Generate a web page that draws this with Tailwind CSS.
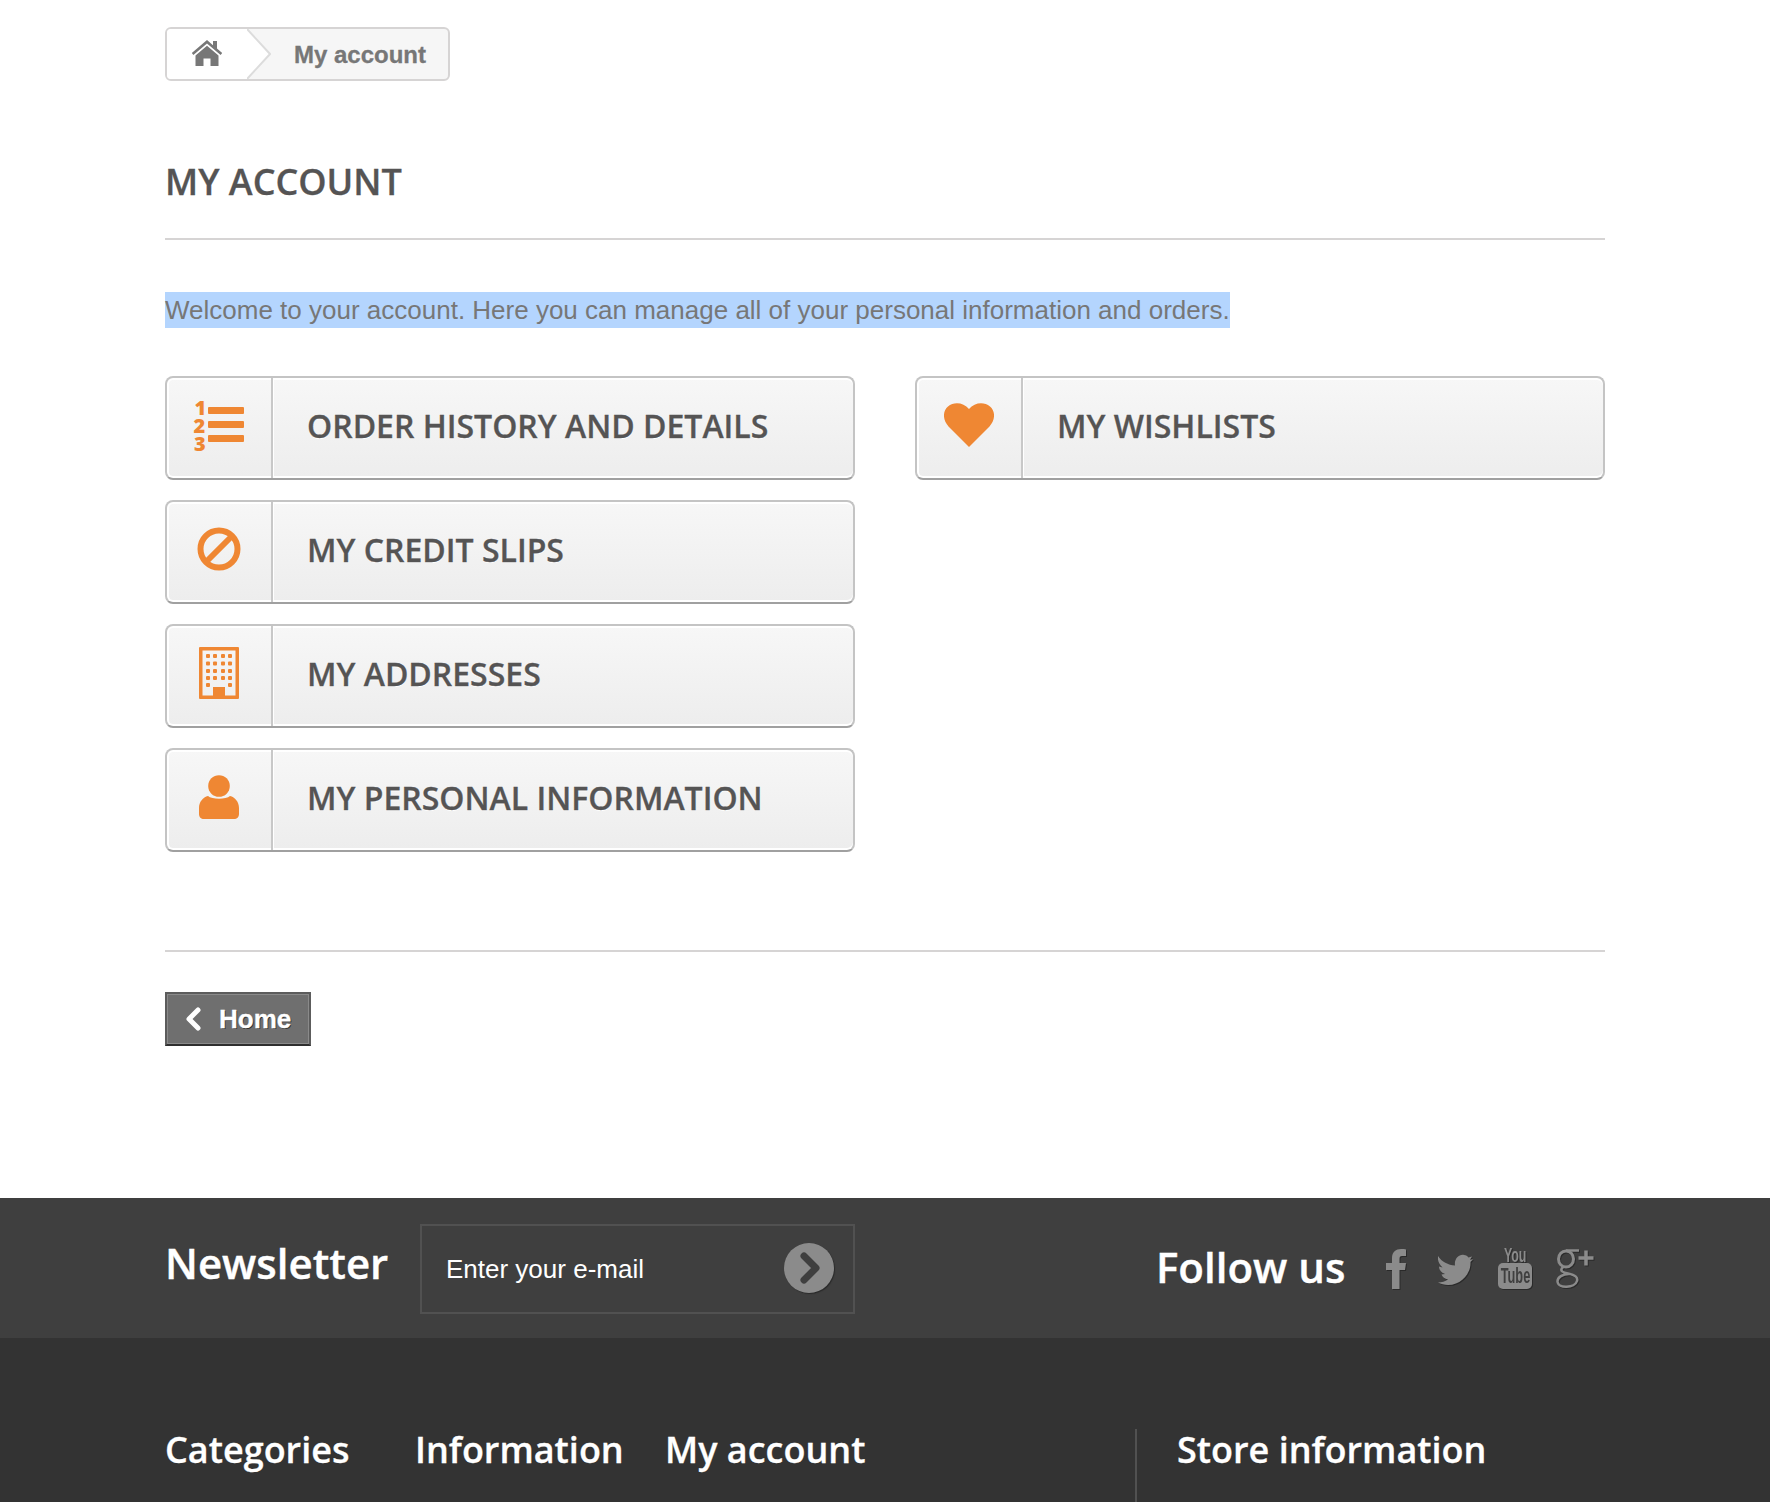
<!DOCTYPE html>
<html lang="en">
  <head>
    <meta charset="UTF-8" />
    <title>My account</title>
    <script src="https://cdn.jsdelivr.net/npm/@tailwindcss/browser@4"></script>
  </head>

  <body class="bg-white h-[1502px] overflow-hidden flex flex-col font-['Liberation_Sans',sans-serif]">
    <main class="w-[1440px] ml-[165px] pt-[27px] h-[1198px] shrink-0">
      <!-- breadcrumb -->
      <div class="relative flex items-center w-[285px] h-[54px] border-2 border-[#d6d4d4] rounded-[6px] bg-[#f6f6f6] overflow-hidden">
        <div class="w-[80px] h-full bg-white flex items-center justify-center">
          <svg class="w-[32px] h-[28px] mb-[3px]" viewBox="0 0 32 28" fill="#777777">
            <path d="M16 1 L0.8 14 L2.4 16 L16 4.6 L29.6 16 L31.2 14 L26 9.6 L26 2 L22 2 L22 6.2 Z" />
            <path d="M16 6.8 L4.5 16.4 L4.5 27 L12.5 27 L12.5 19.5 L19.5 19.5 L19.5 27 L27.5 27 L27.5 16.4 Z" />
          </svg>
        </div>
        <svg class="w-[24px] h-[50px] shrink-0" viewBox="0 0 24 50" fill="none">
          <path d="M0 0 L23 25 L0 50 Z" fill="#ffffff" />
          <path d="M0 0 L23 25 L0 50" stroke="#dcdcdc" stroke-width="2" />
        </svg>
        <span class="pl-[23px] pt-[1px] text-[24px] font-bold text-[#777777] whitespace-nowrap [-webkit-text-stroke:0.3px_#777777]">My account</span>
      </div>

      <h1 class="mt-[76px] font-['Open_Sans',sans-serif] font-semibold text-[36px] leading-[50px] text-[#555454] uppercase [-webkit-text-stroke:0.3px_#555454]">My account</h1>
      <div class="mt-[31px] h-[2px] bg-[#d6d4d4]"></div>

      <p class="mt-[52px] h-[36px] leading-[36px] text-[26px] text-[#777777]">
        <span class="bg-[#b4d5fe] inline-block h-[36px]">Welcome to your account. Here you can manage all of your personal information and orders.</span>
      </p>

      <!-- account links -->
      <div class="mt-[48px] h-[575px] flex justify-between items-start">
        <div class="w-[690px] flex flex-col gap-[20px]">
          <a class="flex h-[104px] border-2 border-[#c4c4c4] border-b-[#a0a0a0] rounded-[8px] bg-linear-to-b from-[#f7f7f7] to-[#ededed] overflow-hidden shadow-[inset_0_2px_0_#ffffff,inset_2px_0_0_#ffffff,inset_0_-2px_0_#ffffff]">
            <span class="w-[106px] shrink-0 flex items-center justify-center border-r-2 border-[#c8c8c8] shadow-[1px_0_0_#ffffff]">
              <svg class="w-[50px] h-[52px] mb-[4px] overflow-visible" viewBox="0 0 50 52" fill="#ef8733">
                <text x="0.5" y="15" font-family="Open Sans" font-weight="800" font-size="20">1</text>
                <text x="-0.500" y="33" font-family="Open Sans" font-weight="800" font-size="20">2</text>
                <text x="0" y="51" font-family="Open Sans" font-weight="800" font-size="20">3</text>
                <rect x="14" y="7" width="36" height="7" rx="1" />
                <rect x="14" y="21" width="36" height="7" rx="1" />
                <rect x="14" y="35" width="36" height="7" rx="1" />
              </svg>
            </span>
            <span class="pl-[34px] pb-[4px] flex items-center font-['Open_Sans',sans-serif] font-semibold text-[32px] text-[#555454] uppercase whitespace-nowrap [-webkit-text-stroke:0.3px_#555454] [text-shadow:0_1px_0_#ffffff]">Order history and details</span>
          </a>

          <a class="flex h-[104px] border-2 border-[#c4c4c4] border-b-[#a0a0a0] rounded-[8px] bg-linear-to-b from-[#f7f7f7] to-[#ededed] overflow-hidden shadow-[inset_0_2px_0_#ffffff,inset_2px_0_0_#ffffff,inset_0_-2px_0_#ffffff]">
            <span class="w-[106px] shrink-0 flex items-center justify-center border-r-2 border-[#c8c8c8] shadow-[1px_0_0_#ffffff]">
              <svg class="w-[44px] h-[44px] mb-[6px]" viewBox="0 0 44 44" fill="none" stroke="#ef8733">
                <circle cx="22" cy="22" r="18.500" stroke-width="6" />
                <path d="M10 34 L34 10" stroke-width="6" />
              </svg>
            </span>
            <span class="pl-[34px] pb-[4px] flex items-center font-['Open_Sans',sans-serif] font-semibold text-[32px] text-[#555454] uppercase whitespace-nowrap [-webkit-text-stroke:0.3px_#555454] [text-shadow:0_1px_0_#ffffff]">My credit slips</span>
          </a>

          <a class="flex h-[104px] border-2 border-[#c4c4c4] border-b-[#a0a0a0] rounded-[8px] bg-linear-to-b from-[#f7f7f7] to-[#ededed] overflow-hidden shadow-[inset_0_2px_0_#ffffff,inset_2px_0_0_#ffffff,inset_0_-2px_0_#ffffff]">
            <span class="w-[106px] shrink-0 flex items-center justify-center border-r-2 border-[#c8c8c8] shadow-[1px_0_0_#ffffff]">
              <svg class="w-[40px] h-[52px] mb-[6px]" viewBox="0 0 40 52" fill="#ef8733">
                <path fill-rule="evenodd" d="M1 0 H39 a1 1 0 0 1 1 1 V51 a1 1 0 0 1 -1 1 H1 a1 1 0 0 1 -1 -1 V1 a1 1 0 0 1 1 -1 Z M3.500 3.500 V48.500 H14 V40 H26 V48.500 H36.500 V3.500 Z" />
                <g>
                  <rect x="7" y="7" width="4" height="4" rx="1" /><rect x="14" y="7" width="4" height="4" rx="1" /><rect x="22" y="7" width="4" height="4" rx="1" /><rect x="29" y="7" width="4" height="4" rx="1" />
                  <rect x="7" y="14.500" width="4" height="4" rx="1" /><rect x="14" y="14.500" width="4" height="4" rx="1" /><rect x="22" y="14.500" width="4" height="4" rx="1" /><rect x="29" y="14.500" width="4" height="4" rx="1" />
                  <rect x="7" y="22" width="4" height="4" rx="1" /><rect x="14" y="22" width="4" height="4" rx="1" /><rect x="22" y="22" width="4" height="4" rx="1" /><rect x="29" y="22" width="4" height="4" rx="1" />
                  <rect x="7" y="29" width="4" height="4" rx="1" /><rect x="14" y="29" width="4" height="4" rx="1" /><rect x="22" y="29" width="4" height="4" rx="1" /><rect x="29" y="29" width="4" height="4" rx="1" />
                  <rect x="7" y="36" width="4" height="4" rx="1" /><rect x="29" y="36" width="4" height="4" rx="1" />
                </g>
              </svg>
            </span>
            <span class="pl-[34px] pb-[4px] flex items-center font-['Open_Sans',sans-serif] font-semibold text-[32px] text-[#555454] uppercase whitespace-nowrap [-webkit-text-stroke:0.3px_#555454] [text-shadow:0_1px_0_#ffffff]">My addresses</span>
          </a>

          <a class="flex h-[104px] border-2 border-[#c4c4c4] border-b-[#a0a0a0] rounded-[8px] bg-linear-to-b from-[#f7f7f7] to-[#ededed] overflow-hidden shadow-[inset_0_2px_0_#ffffff,inset_2px_0_0_#ffffff,inset_0_-2px_0_#ffffff]">
            <span class="w-[106px] shrink-0 flex items-center justify-center border-r-2 border-[#c8c8c8] shadow-[1px_0_0_#ffffff]">
              <svg class="w-[40px] h-[44px] mb-[6px]" viewBox="0 0 40 44" fill="#ef8733">
                <circle cx="20" cy="11" r="10.800" />
                <path d="M9 21 C13 24.500 27 24.500 31 21 C36 22 40 27 40 33 V39 C40 42 38 44 35 44 H5 C2 44 0 42 0 39 V33 C0 27 4 22 9 21 Z" />
              </svg>
            </span>
            <span class="pl-[34px] pb-[4px] flex items-center font-['Open_Sans',sans-serif] font-semibold text-[32px] text-[#555454] uppercase whitespace-nowrap [-webkit-text-stroke:0.3px_#555454] [text-shadow:0_1px_0_#ffffff]">My personal information</span>
          </a>
        </div>

        <div class="w-[690px]">
          <a class="flex h-[104px] border-2 border-[#c4c4c4] border-b-[#a0a0a0] rounded-[8px] bg-linear-to-b from-[#f7f7f7] to-[#ededed] overflow-hidden shadow-[inset_0_2px_0_#ffffff,inset_2px_0_0_#ffffff,inset_0_-2px_0_#ffffff]">
            <span class="w-[106px] shrink-0 flex items-center justify-center border-r-2 border-[#c8c8c8] shadow-[1px_0_0_#ffffff]">
              <svg class="w-[50px] h-[44px] mb-[6px]" viewBox="0 0 50 44" fill="#ef8733">
                <path d="M25 44 L4.500 23.500 C-1.500 17 -1.500 8 4 3.500 C10 -1.500 19.500 -0.500 25 6 C30.500 -0.500 40 -1.500 46 3.500 C51.500 8 51.500 17 45.500 23.500 Z" />
              </svg>
            </span>
            <span class="pl-[34px] pb-[4px] flex items-center font-['Open_Sans',sans-serif] font-semibold text-[32px] text-[#555454] uppercase whitespace-nowrap [-webkit-text-stroke:0.3px_#555454] [text-shadow:0_1px_0_#ffffff]">My wishlists</span>
          </a>
        </div>
      </div>

      <div class="h-[2px] bg-[#d6d4d4] mt-[-1px]"></div>

      <a class="mt-[40px] flex items-center w-[146px] h-[54px] bg-[#6f6f6f] border-2 border-[#5c5c5c] border-b-[#2e2e2e] shadow-[inset_0_0_0_1px_#8a8a8a]">
        <svg class="ml-[18px] w-[17px] h-[24px]" viewBox="0 0 17 24" fill="none">
          <path d="M13 3 L4 12 L13 21" stroke="#ffffff" stroke-width="5" stroke-linecap="round" stroke-linejoin="round" />
        </svg>
        <span class="ml-[17px] text-[26px] font-bold text-white [text-shadow:1px_1px_#333333] [-webkit-text-stroke:0.3px_#ffffff]">Home</span>
      </a>
    </main>

    <footer class="grow bg-[#333333] font-['Open_Sans',sans-serif] text-white">
      <!-- newsletter and social -->
      <div class="h-[140px] bg-[#3f3f3f] pl-[165px] flex items-start">
        <h4 class="w-[255px] mt-[37px] font-semibold text-[42px] leading-[56px] whitespace-nowrap [-webkit-text-stroke:0.4px_#ffffff]">Newsletter</h4>
        <div class="mt-[26px] w-[435px] h-[90px] border-2 border-[#515151] flex items-center justify-between pl-[24px] pr-[19px]">
          <span class="font-['Liberation_Sans',sans-serif] text-[26px]">Enter your e-mail</span>
          <span class="mb-[3px] w-[50px] h-[50px] rounded-full bg-[#8b8b8b] flex items-center justify-center shadow-[1px_1px_1px_#2a2a2a]">
            <svg class="w-[24px] h-[32px] ml-[2px]" viewBox="0 0 24 32" fill="none">
              <path d="M6 4 L18 16 L6 28" stroke="#3f3f3f" stroke-width="7" stroke-linecap="round" stroke-linejoin="round" />
            </svg>
          </span>
        </div>
        <h4 class="ml-[301px] mt-[41px] font-semibold text-[42px] leading-[56px] whitespace-nowrap [-webkit-text-stroke:0.4px_#ffffff]">Follow us</h4>
        <div class="ml-[41px] mt-[49px] flex items-start">
          <svg class="w-[20px] h-[40px] mt-[2px]" viewBox="0 0 20 40" fill="#8b8b8b" style="filter: drop-shadow(1px 1px 0 #2a2a2a)">
            <path d="M6 40 V21 H0 V14 H6 V9 C6 3 10 0 15 0 C17 0 19 0 20 0.500 V7 H16 C14 7 13.500 8 13.500 10 V14 H20 L19 21 H13.500 V40 Z" />
          </svg>
          <svg class="ml-[32px] w-[35px] h-[33px] mt-[7px]" viewBox="0 0 35 33" fill="#8b8b8b" style="filter: drop-shadow(1px 1px 0 #2a2a2a)">
            <path d="M0 2 C4 8 10 11 17 11.500 C16 5 21 0 26 1 C28 1.300 29.500 2 30.500 3.500 L34 2.500 L32 5.800 L35 5.200 L32.500 8 C33 19 24 31 10 31 C6 31 3 30 0 28.500 C4 28.500 7 27.500 10 25.500 C6.500 25 4.500 23 3.500 20.500 L7 20 C3 18.500 1 15.500 1 12.500 L4.500 13.500 C0.500 10 -0.500 6 0 2 Z" />
          </svg>
          <div class="ml-[25px] w-[34px] flex flex-col items-center font-['Liberation_Sans',sans-serif] font-bold text-[#8b8b8b] [filter:drop-shadow(1px_1px_0_#2a2a2a)]">
            <span class="text-[20px] leading-[16px] h-[16px] scale-x-[0.62] whitespace-nowrap">You</span>
            <span class="w-[34px] h-[26px] rounded-[5px] bg-[#8b8b8b] text-[#3f3f3f] text-[22px] leading-[26px] flex justify-center overflow-hidden"><span class="inline-block scale-x-[0.58] whitespace-nowrap">Tube</span></span>
          </div>
          <svg class="ml-[24px] w-[38px] h-[42px] mt-[1px]" viewBox="0 0 38 42" fill="none" stroke="#8b8b8b" style="filter: drop-shadow(1px 1px 0 #2a2a2a)">
            <ellipse cx="10" cy="11" rx="7.500" ry="8" stroke-width="3" />
            <path d="M10 2.500 H23" stroke-width="2.500" />
            <path d="M7 19 C3 23 7 24.500 12 25.500 C20 27 22 30 21 33 C19 40 2 41 1.500 33.500 C1.300 29 7 26 13 26" stroke-width="2.500" />
            <path d="M22.500 10 H37.500 M30 2.500 V17.500" stroke-width="3.500" />
          </svg>
        </div>
      </div>

      <!-- footer columns -->
      <div class="pl-[165px] pt-[89px] flex items-start relative">
        <h4 class="w-[250px] font-semibold text-[36px] leading-[46px] whitespace-nowrap [-webkit-text-stroke:0.3px_#ffffff]">Categories</h4>
        <h4 class="w-[250px] font-semibold text-[36px] leading-[46px] whitespace-nowrap [-webkit-text-stroke:0.3px_#ffffff]">Information</h4>
        <h4 class="w-[470px] font-semibold text-[36px] leading-[46px] whitespace-nowrap [-webkit-text-stroke:0.3px_#ffffff]">My account</h4>
        <div class="border-l-2 border-[#515151] pl-[40px] h-[100px] mt-[2px]">
          <h4 class="mt-[-2px] font-semibold text-[36px] leading-[46px] whitespace-nowrap [-webkit-text-stroke:0.3px_#ffffff]">Store information</h4>
        </div>
      </div>
    </footer>
  </body>
</html>
